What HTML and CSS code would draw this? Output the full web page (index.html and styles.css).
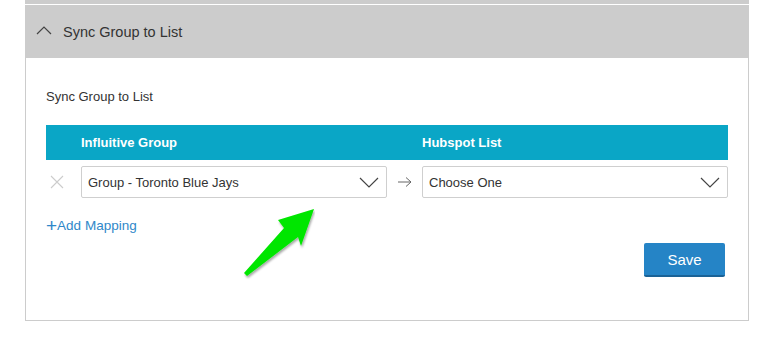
FILE: index.html
```html
<!DOCTYPE html>
<html lang="en">
<head>
  <meta charset="UTF-8">
  <title>Sync Group to List</title>
  <link rel="stylesheet" href="styles.css">
</head>
<body>
  <div class="panel">
    <div class="panel-top"></div>
    <div class="panel-header">
      <svg class="chevron-up" width="16" height="10" viewBox="0 0 16 10">
        <path d="M1 9 L8 2 L15 9" fill="none" stroke="#444" stroke-width="1.2"/>
      </svg>
      <span>Sync Group to List</span>
    </div>
    <div class="panel-body">
      <div class="section-label">Sync Group to List</div>

      <div class="mapping">
        <div class="mapping-head">
          <div></div>
          <div class="col-title">Influitive Group</div>
          <div></div>
          <div class="col-title">Hubspot List</div>
        </div>
        <div class="mapping-row">
          <div class="remove">
            <svg width="14" height="14" viewBox="0 0 14 14">
              <path d="M1 1 L13 13 M13 1 L1 13" stroke="#ccc" stroke-width="1.1"/>
            </svg>
          </div>
          <div class="select">
            <span>Group - Toronto Blue Jays</span>
            <svg width="20" height="11" viewBox="0 0 20 11">
              <path d="M1 1 L10 10 L19 1" fill="none" stroke="#444" stroke-width="1.2"/>
            </svg>
          </div>
          <div class="to">
            <svg width="14" height="10" viewBox="0 0 14 10">
              <path d="M0 5 H13 M8 0.5 L13 5 L8 9.5" fill="none" stroke="#666" stroke-width="1"/>
            </svg>
          </div>
          <div class="select">
            <span>Choose One</span>
            <svg width="20" height="11" viewBox="0 0 20 11">
              <path d="M1 1 L10 10 L19 1" fill="none" stroke="#444" stroke-width="1.2"/>
            </svg>
          </div>
        </div>
      </div>

      <a class="add-mapping" href="#"><span class="plus">+</span>Add Mapping</a>

      <div class="actions">
        <button class="btn-save">Save</button>
      </div>
    </div>

    <svg class="pointer" width="90" height="90" viewBox="0 0 90 90">
      <defs>
        <filter id="shadow" x="-20%" y="-20%" width="140%" height="140%">
          <feDropShadow dx="1" dy="2" stdDeviation="1.2" flood-color="#000" flood-opacity="0.35"/>
        </filter>
      </defs>
      <path d="M89 9 L53 20 L59 28 L19 73 L22 76 L73 37 L76 46 Z" fill="#00e600" filter="url(#shadow)"/>
    </svg>
  </div>
</body>
</html>
```

FILE: styles.css
```css
* {
  margin: 0;
  padding: 0;
  box-sizing: border-box;
}

body {
  font-family: 'Liberation Sans', Arial, sans-serif;
  color: #333;
  background: #fff;
}

.panel {
  position: relative;
  width: 724px;
  margin-left: 25px;
}

.panel-top {
  height: 4px;
  background: #cccccc;
  margin-bottom: 1px;
}

.panel-header {
  height: 53px;
  background: #cccccc;
  display: flex;
  align-items: center;
  padding-left: 11px;
  font-size: 14.5px;
  color: #333;
}

.chevron-up {
  margin-right: 11px;
  margin-top: -3px;
}

.panel-body {
  border: 1px solid #cccccc;
  border-top: none;
  padding: 31px 20px 43px 20px;
}

.section-label {
  font-size: 13px;
  margin-bottom: 21px;
}

.mapping-head,
.mapping-row {
  display: grid;
  grid-template-columns: 35px 1fr 35px 1fr;
}

.mapping-head {
  height: 35px;
  background: #0aa6c6;
  align-items: center;
}

.col-title {
  color: #fff;
  font-weight: bold;
  font-size: 13px;
}

.mapping-row {
  margin-top: 6px;
  height: 32px;
  align-items: center;
}

.remove,
.to {
  display: flex;
  align-items: center;
}

.remove {
  padding-left: 4px;
}

.to {
  padding-left: 11px;
}

.select {
  height: 32px;
  border: 1px solid #cfcfcf;
  border-radius: 2px;
  display: flex;
  align-items: center;
  justify-content: space-between;
  padding: 0 7px 0 6px;
  font-size: 13px;
  color: #333;
}

.add-mapping {
  display: inline-block;
  margin-top: 20px;
  font-size: 13.5px;
  color: #2f88c9;
  text-decoration: none;
}

.plus {
  font-size: 19px;
  font-weight: 300;
  line-height: 13px;
  vertical-align: -2px;
}

.actions {
  display: flex;
  justify-content: flex-end;
  padding-right: 3px;
  margin-top: 9px;
}

.btn-save {
  width: 81px;
  height: 34px;
  background: #2584c6;
  border: none;
  border-bottom: 2px solid #1a6296;
  border-radius: 2px;
  color: #fff;
  font-family: 'Liberation Sans', Arial, sans-serif;
  font-size: 15px;
}

.pointer {
  position: absolute;
  left: 200px;
  top: 200px;
}
```
